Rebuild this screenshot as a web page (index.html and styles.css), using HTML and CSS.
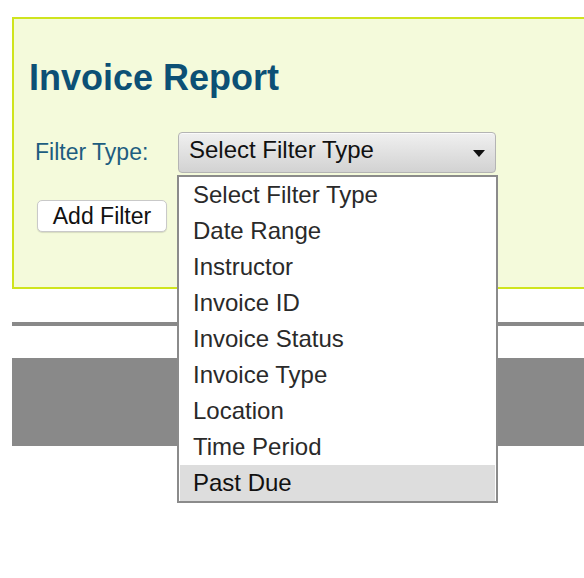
FILE: index.html
```html
<!DOCTYPE html>
<html>
<head>
<meta charset="utf-8">
<link rel="stylesheet" href="styles.css">
</head>
<body>
<div class="panel">
  <h1 class="title">Invoice Report</h1>
  <div class="filter-row">
    <span class="label">Filter Type:</span>
    <div class="select-wrap">
      <div class="select">
        <span class="select-text">Select Filter Type</span>
        <span class="arrow"></span>
      </div>
      <ul class="dropdown">
        <li class="opt">Select Filter Type</li>
        <li class="opt">Date Range</li>
        <li class="opt">Instructor</li>
        <li class="opt">Invoice ID</li>
        <li class="opt">Invoice Status</li>
        <li class="opt">Invoice Type</li>
        <li class="opt">Location</li>
        <li class="opt">Time Period</li>
        <li class="opt opt-active">Past Due</li>
      </ul>
    </div>
  </div>
  <button class="add-btn">Add Filter</button>
</div>
<div class="rule"></div>
<div class="gray-block"></div>
</body>
</html>
```

FILE: styles.css
```css
body {
  margin: 0;
  padding: 0;
  min-height: 578px;
  background: #ffffff;
  font-family: "Liberation Sans", Arial, Helvetica, sans-serif;
}

.panel {
  margin: 17px 0 0 12px;
  height: 229px;
  border: 2px solid #cfe41e;
  border-right: none;
  background: #f4fadb;
  box-sizing: content-box;
  padding-top: 39px;
  display: flex;
  flex-direction: column;
  align-items: flex-start;
}

.title {
  margin: 0 0 0 15px;
  font-size: 36px;
  line-height: 40px;
  font-weight: bold;
  color: #0c5075;
}

.filter-row {
  margin-top: 34px;
  display: flex;
  align-items: flex-start;
  height: 41px;
}

.label {
  margin-left: 21px;
  width: 143px;
  font-size: 23px;
  line-height: 41px;
  color: #1d5d80;
}

.select-wrap {
  position: relative;
}

.select {
  width: 316px;
  height: 39px;
  box-sizing: content-box;
  border: 1px solid #b4b4b4;
  border-radius: 4px;
  background: linear-gradient(#f0f0f0, #d2d2d2);
  box-shadow: inset 0 1px 0 #fafafa;
  display: flex;
  align-items: flex-start;
  justify-content: space-between;
  padding: 0;
}

.select-text {
  margin-left: 10px;
  font-size: 24px;
  line-height: 33px;
  color: #111;
}

.arrow {
  width: 0;
  height: 0;
  margin: 17px 10px 0 0;
  border-left: 6px solid transparent;
  border-right: 6px solid transparent;
  border-top: 7px solid #111;
}

.dropdown {
  position: absolute;
  left: -1px;
  top: 43px;
  width: 315px;
  margin: 0;
  padding: 0 1px;
  list-style: none;
  background: #ffffff;
  border: 2px solid #8b8b8b;
  z-index: 2;
}

.opt {
  height: 36px;
  line-height: 36px;
  padding-left: 13px;
  font-size: 24px;
  color: #2a2a2a;
}

.opt-active {
  background: #dddddd;
  color: #111;
}

.add-btn {
  margin: 27px 0 0 23px;
  width: 130px;
  height: 32px;
  padding: 0;
  border: 1px solid #c9c9c9;
  border-radius: 5px;
  background: #ffffff;
  box-shadow: 0 1px 1px rgba(0, 0, 0, 0.12);
  font-family: "Liberation Sans", Arial, Helvetica, sans-serif;
  font-size: 23px;
  line-height: 30px;
  color: #111;
}

.rule {
  margin: 33px 0 0 12px;
  height: 4px;
  background: #898989;
}

.gray-block {
  margin: 32px 0 0 12px;
  height: 88px;
  background: #898989;
}
```
